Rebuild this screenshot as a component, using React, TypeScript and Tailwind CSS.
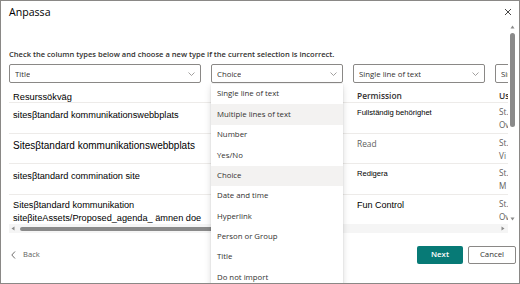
import React from "react";

const menuItems = [
  "Single line of text",
  "Multiple lines of text",
  "Number",
  "Yes/No",
  "Choice",
  "Date and time",
  "Hyperlink",
  "Person or Group",
  "Title",
  "Do not import",
];

const highlighted = ["Multiple lines of text", "Choice"];

function Chevron() {
  return (
    <svg width="7" height="4" viewBox="0 0 7 4" className="shrink-0">
      <polyline points="0.5,0.5 3.5,3.5 6.5,0.5" fill="none" stroke="#8a8886" strokeWidth="0.8" />
    </svg>
  );
}

function Dropdown({ value, width, open }: { value: string; width: string; open?: boolean }) {
  return (
    <div className={`relative shrink-0 ${width}`}>
      <div className="flex h-[19px] items-center justify-between rounded-[2px] border border-[#8a8886] bg-white pl-[5px] pr-[5px]">
        <span className="truncate text-[7.8px] leading-[10px] text-[#323130]">{value}</span>
        <Chevron />
      </div>
      {open && (
        <div className="absolute left-0 top-[20px] z-10 w-full bg-white shadow-[0_3px_7px_rgba(0,0,0,0.14),0_0_2px_rgba(0,0,0,0.1)]">
          {menuItems.map((item) => (
            <div
              key={item}
              className={`flex h-[20.4px] items-center pl-[6px] text-[7.8px] text-[#323130] ${
                highlighted.includes(item) ? "bg-[#f3f2f1]" : ""
              }`}
            >
              {item}
            </div>
          ))}
        </div>
      )}
    </div>
  );
}

type Row = {
  path: string;
  pathSize: string;
  perm: string;
  permClass: string;
  us: string[];
  h: string;
};

const rows: Row[] = [
  {
    path: "sitesβtandard kommunikationswebbplats",
    pathSize: "text-[9.2px]",
    perm: "Fullständig behörighet",
    permClass: "font-['Liberation_Sans',sans-serif] text-[7.6px] text-black",
    us: ["St.", "Ov"],
    h: "h-[31px]",
  },
  {
    path: "Sitesβtandard kommunikationswebbplats",
    pathSize: "text-[10px]",
    perm: "Read",
    permClass: "text-[8.4px] text-[#605e5c]",
    us: ["St.", "Vi"],
    h: "h-[30px]",
  },
  {
    path: "sitesβtandard commination site",
    pathSize: "text-[9.2px]",
    perm: "Redigera",
    permClass: "font-['Liberation_Sans',sans-serif] text-[7.6px] text-black",
    us: ["St.", "M"],
    h: "h-[31px]",
  },
];

export default function App() {
  return (
    <div className="flex h-[284px] w-[520px] flex-col overflow-hidden border border-[#8a8886] bg-white font-['Open_Sans',sans-serif] text-[#323130]">
      {/* header */}
      <div className="flex h-[21px] shrink-0 items-start justify-between pl-[8px] pr-[7px] pt-[4px]">
        <h1 className="text-[10.6px] leading-[14px] text-black">Anpassa</h1>
        <svg width="8" height="8" viewBox="0 0 8 8" className="mt-[3px]">
          <path d="M1 1L7 7M7 1L1 7" stroke="#323130" strokeWidth="0.9" />
        </svg>
      </div>

      {/* scroll area */}
      <div className="flex shrink-0 flex-col pl-[8px] pr-[2px]">
        <div className="flex h-[202px]">
          <div className="min-w-0 flex-1 overflow-x-clip pt-[26px]">
            <p className="h-[12px] whitespace-nowrap text-[7.55px] font-semibold leading-[12px] text-[#323130]">
              Check the column types below and choose a new type if the current selection is incorrect.
            </p>
            <div className="mt-[4px] flex gap-[10px]">
              <Dropdown value="Title" width="w-[192px]" />
              <Dropdown value="Choice" width="w-[132px]" open />
              <Dropdown value="Single line of text" width="w-[132px]" />
              <Dropdown value="Single line of text" width="w-[132px]" />
            </div>

            {/* table */}
            <div className="w-[640px]">
              <div className="grid h-[20px] grid-cols-[202px_142px_142px_154px] border-b border-[#edebe9]">
                <div className="pl-[4px] pt-[8px] font-['Liberation_Sans',sans-serif] text-[9.3px] leading-[12px] text-black">
                  Resurssökväg
                </div>
                <div />
                <div className="pl-[4px] pt-[7px] text-[8.4px] font-semibold leading-[12px]">Permission</div>
                <div className="pl-[4px] pt-[7px] text-[8.4px] font-semibold leading-[12px]">Us</div>
              </div>
              {rows.map((r) => (
                <div
                  key={r.perm}
                  className={`grid grid-cols-[202px_142px_142px_154px] border-b border-[#edebe9] ${r.h}`}
                >
                  <div
                    className={`whitespace-nowrap pl-[4px] pt-[6px] font-['Liberation_Sans',sans-serif] leading-[12px] text-black ${r.pathSize}`}
                  >
                    {r.path}
                  </div>
                  <div />
                  <div className={`pl-[4px] pt-[4px] leading-[11px] ${r.permClass}`}>{r.perm}</div>
                  <div className="pl-[4px] pt-[3px] text-[8.2px] leading-[12.5px] text-[#605e5c]">
                    {r.us.map((u) => (
                      <div key={u}>{u}</div>
                    ))}
                  </div>
                </div>
              ))}
              <div className="grid h-[29px] grid-cols-[202px_142px_142px_154px]">
                <div className="whitespace-nowrap pl-[4px] pt-[4px] font-['Liberation_Sans',sans-serif] text-[9.2px] leading-[13px] text-black">
                  <div>Sitesβtandard kommunikation</div>
                  <div>siteβiteAssets/Proposed_agenda_ ämnen doe</div>
                </div>
                <div />
                <div className="pl-[4px] pt-[4px] font-['Liberation_Sans',sans-serif] text-[9px] leading-[12px] text-black">
                  Fun Control
                </div>
                <div className="pl-[4px] pt-[3px] text-[8.2px] leading-[12.5px] text-[#605e5c]">
                  <div>St.</div>
                  <div>Ov</div>
                </div>
              </div>
            </div>
          </div>

          {/* vertical scrollbar */}
          <div className="flex w-[9px] shrink-0 flex-col items-center pt-[3px] pb-[3px]">
            <svg width="5" height="4" viewBox="0 0 5 4">
              <path d="M2.5 0.5L4.5 3.5H0.5Z" fill="#8a8a8a" />
            </svg>
            <div className="mt-[4px] h-[94px] w-[5px] rounded-full bg-[#8a8a8a]" />
            <div className="flex-1" />
            <svg width="5" height="4" viewBox="0 0 5 4">
              <path d="M0.5 0.5H4.5L2.5 3.5Z" fill="#8a8a8a" />
            </svg>
          </div>
        </div>

        {/* horizontal scrollbar */}
        <div className="flex h-[9px] w-[499px] items-center bg-[#f5f5f5] pl-[2px] pr-[3px]">
          <svg width="4" height="5" viewBox="0 0 4 5">
            <path d="M3.5 0.5V4.5L0.5 2.5Z" fill="#8a8a8a" />
          </svg>
          <div className="ml-[5px] h-[4px] w-[240px] rounded-full bg-[#8a8a8a]" />
          <div className="flex-1" />
          <svg width="4" height="5" viewBox="0 0 4 5">
            <path d="M0.5 0.5V4.5L3.5 2.5Z" fill="#8a8a8a" />
          </svg>
        </div>
      </div>

      {/* footer */}
      <div className="flex flex-1 items-start justify-between pl-[10px] pr-[3px] pt-[13px]">
        <div className="flex h-[18px] items-center gap-[7px] text-[#605e5c]">
          <svg width="5" height="8" viewBox="0 0 5 8">
            <polyline points="4,0.5 0.8,4 4,7.5" fill="none" stroke="#605e5c" strokeWidth="0.9" />
          </svg>
          <span className="text-[7.6px]">Back</span>
        </div>
        <div className="flex gap-[5px]">
          <button className="flex h-[18px] w-[46px] items-center justify-center rounded-[2px] bg-[#077a76] text-[7.8px] font-semibold text-white">
            Next
          </button>
          <button className="flex h-[18px] w-[48px] items-center justify-center rounded-[2px] border border-[#8a8886] bg-white text-[7.8px] text-[#323130]">
            Cancel
          </button>
        </div>
      </div>
    </div>
  );
}
